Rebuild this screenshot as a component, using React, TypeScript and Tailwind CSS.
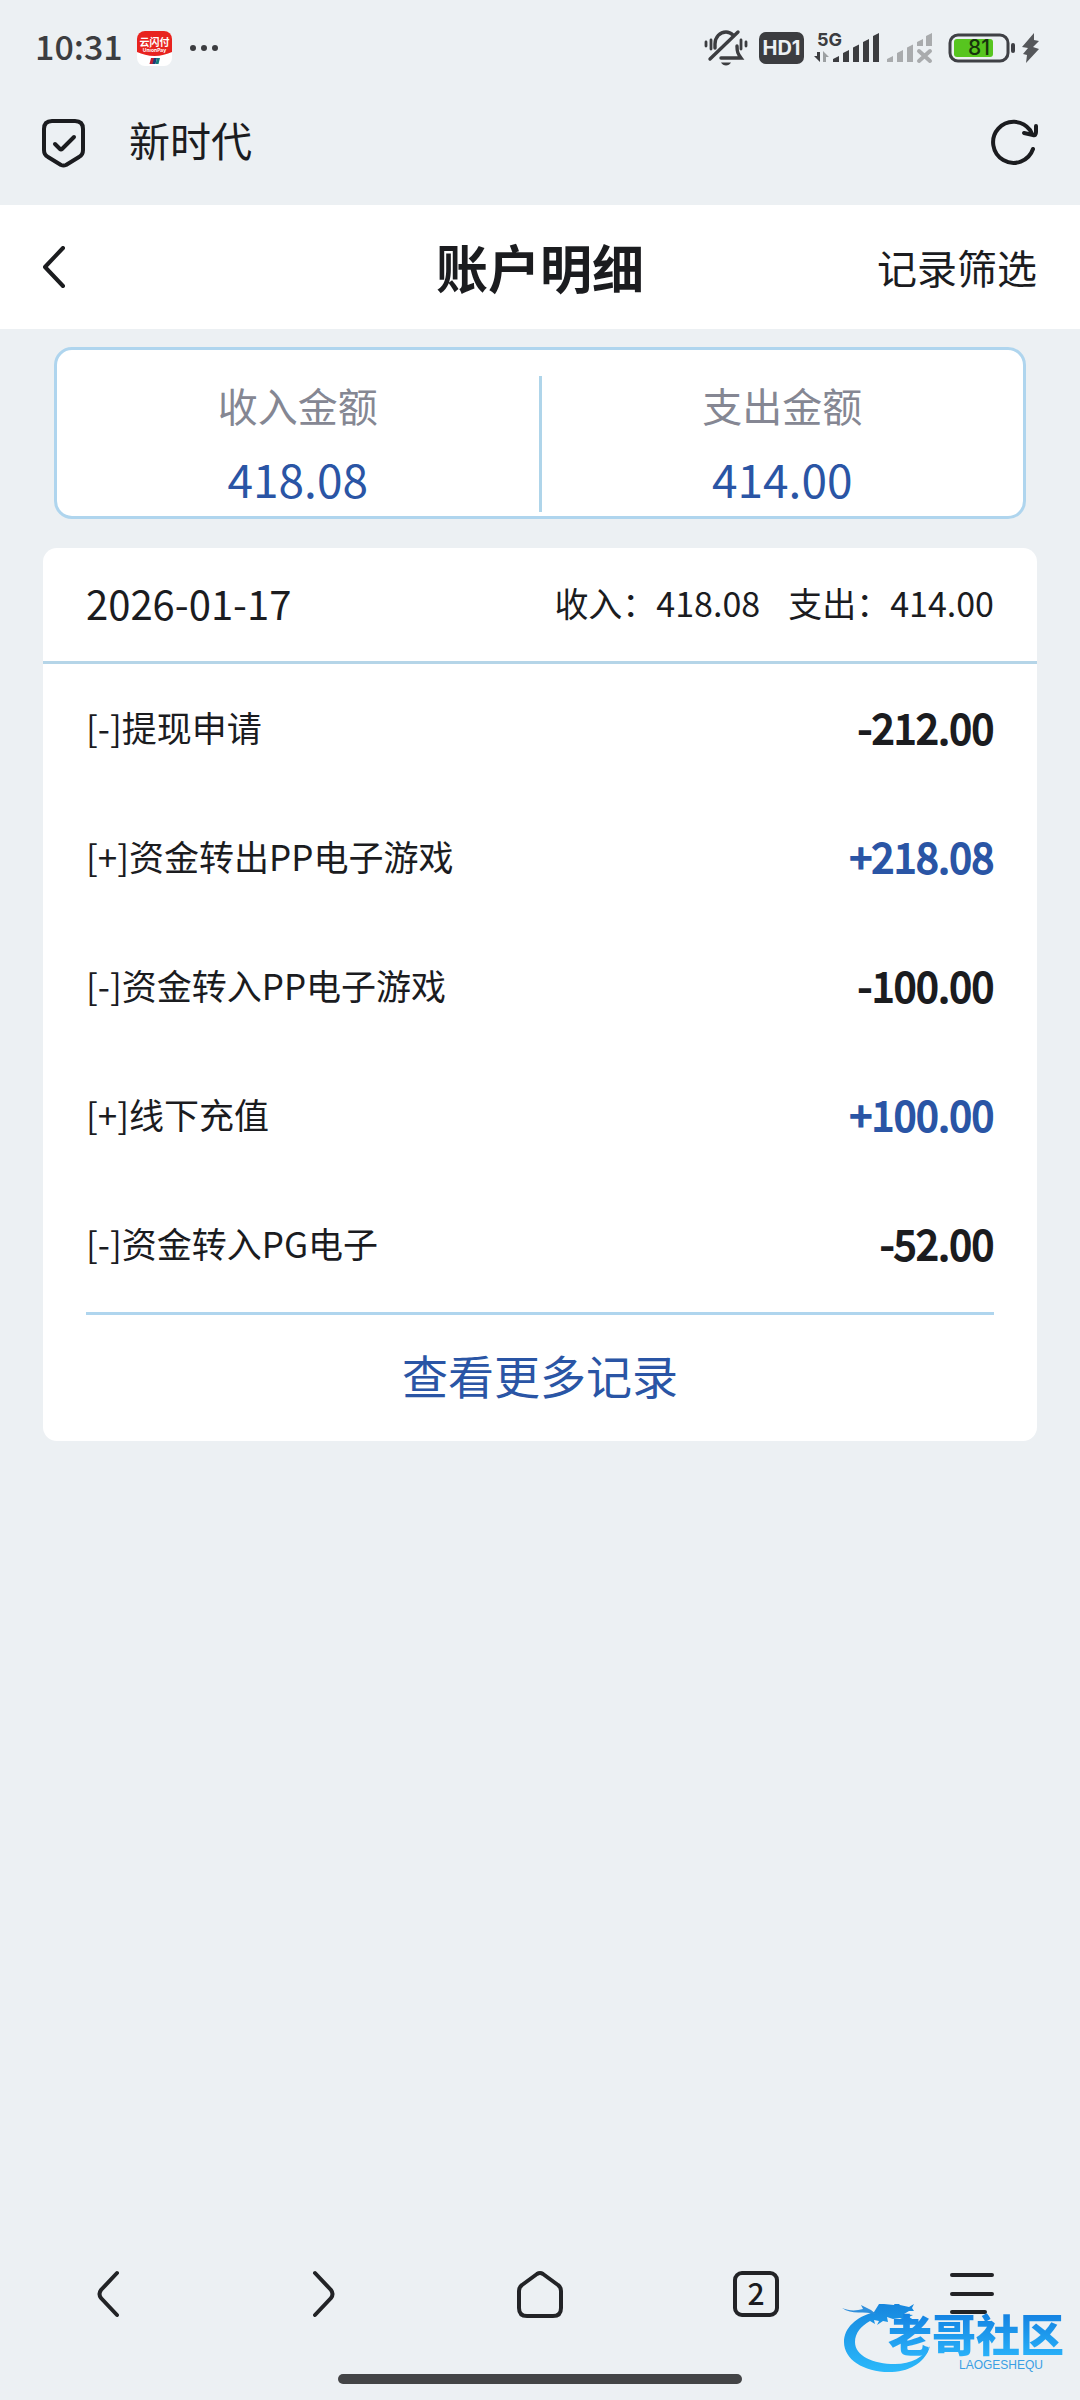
import type { ReactNode } from 'react';

interface RecordItem {
  id: number;
  name: string;
  amount: string;
}

const records: RecordItem[] = [
  { id: 1, name: '[-]提现申请', amount: '-212.00' },
  { id: 2, name: '[+]资金转出PP电子游戏', amount: '+218.08' },
  { id: 3, name: '[-]资金转入PP电子游戏', amount: '-100.00' },
  { id: 4, name: '[+]线下充值', amount: '+100.00' },
  { id: 5, name: '[-]资金转入PG电子', amount: '-52.00' },
];

export default function App() {
  return (
    <div className="relative flex min-h-screen flex-col bg-[#ecf0f3] font-['Noto_Sans_CJK_SC',sans-serif] text-[#1b1c1f]">
      <StatusBar />
      <AddressBar />
      <PageHeader />

      <main className="flex-1 px-[43px] pt-[18px]">
        <section className="mx-[11px] flex h-[172px] rounded-[18px] border-[3px] border-[#afd5ee] bg-white">
          <Total label="收入金额" value="418.08" />
          <div className="mt-[26px] mb-1 w-[3px] bg-[#afd5ea]" />
          <Total label="支出金额" value="414.00" />
        </section>

        <section className="mt-[29px] rounded-[14px] bg-white">
          <div className="flex h-[116px] items-center justify-between border-b-[3px] border-[#b5d5e8] px-[43px] pb-1">
            <h2 className="text-[40px] leading-none">2026-01-17</h2>
            <p className="flex gap-[28px] text-[34px] leading-none">
              <span>收入：418.08</span>
              <span>支出：414.00</span>
            </p>
          </div>

          <ul className="mx-[43px] border-b-[3px] border-[#afd5ee] pb-[3px]">
            {records.map(r => (
              <RecordRow key={r.id} item={r} />
            ))}
          </ul>

          <button type="button" className="block h-[126px] w-full pb-2 text-center text-[46px] leading-none text-[#2a55a5]">
            查看更多记录
          </button>
        </section>
      </main>

      <BottomNav />
      <Watermark />
    </div>
  );
}

function StatusBar() {
  return (
    <div className="flex h-24 items-center justify-between pr-10 pl-[35px] text-[#3c3d40]">
      <div className="flex items-center">
        <span className="w-[102px] pb-1 text-[34px] leading-none font-medium">10:31</span>
        <AppBadge />
        <svg className="ml-[17px]" width="30" height="8" fill="currentColor">
          <circle cx="4" cy="4" r="3" />
          <circle cx="15" cy="4" r="3" />
          <circle cx="26" cy="4" r="3" />
        </svg>
      </div>

      <div className="flex items-center">
        <svg width="44" height="38" viewBox="0 0 44 38" fill="none" stroke="currentColor" strokeWidth="3.4" strokeLinecap="round">
          <path d="M11 19v-4c0-7 5-12 11-12 3 0 5 1 7 3M33 17c0 6 1 8 4 12H17M6 30 34 3" />
          <path d="M2 13v4M7 11v9M37 11v9M42 13v4" strokeWidth="2.8" />
          <path d="M17 33.500h10c-1 2-3 3-5 3s-4-1-5-3Z" fill="currentColor" stroke="none" />
        </svg>
        <span className="ml-[11px] flex h-8 w-[45px] items-center justify-center rounded-[7px] bg-[#3c3d40] font-[Inter,sans-serif] text-[20px] leading-none font-bold text-[#ecf0f3]">
          HD1
        </span>
        <svg className="ml-[10px]" width="66" height="42" viewBox="0 -4 66 42" fill="currentColor">
          <text x="3" y="15" fontSize="18" fontWeight="700" fontFamily="Inter, sans-serif">5G</text>
          <path d="M6 21v10l-6-6h3v-4Z" />
          <path d="M9 31V20l6 6h-3v5Z" opacity="0.45" />
          <path d="M19 31v-3l6-3v6ZM29 31V22l6-3v12ZM39 31V16.500l6-3V31ZM49 31V11l6-3v23ZM59 31V5l6-3v29Z" />
        </svg>
        <svg className="ml-[6px]" width="48" height="34" viewBox="0 0 48 34" fill="#a9abad">
          <path d="M1 31v-3l6-3v6ZM11 31V22l6-3v12ZM21 31V16.500l6-3V31ZM31 15v-4l6-3v7ZM40 15V5l6-3v13Z" />
          <path d="m33 20 11 10M44 20 33 30" stroke="#a9abad" strokeWidth="4" strokeLinecap="round" />
        </svg>
        <Battery />
        <svg className="ml-[6px]" width="19" height="32" viewBox="0 0 19 32" fill="#55575a">
          <path d="M13 1 1 15l6 1-5 6 4 1-1 8 13-14-6-2 6-6-5-1Z" />
        </svg>
      </div>
    </div>
  );
}

function AppBadge() {
  return (
    <svg width="35" height="35" viewBox="0 0 35 35">
      <rect width="35" height="35" rx="8" fill="#fff" />
      <path d="M8 0h19a8 8 0 0 1 8 8v13c-5 2-11 4-17.500 4S5 23 0 21V8a8 8 0 0 1 8-8Z" fill="#e8231f" />
      <text x="17.500" y="15" textAnchor="middle" fontSize="10" fontWeight="700" fill="#fff">云闪付</text>
      <text x="17.500" y="21" textAnchor="middle" fontSize="5" fontWeight="700" fill="#fff" fontFamily="Inter, sans-serif">UnionPay</text>
      <path d="M14 27h4l-1.500 6h-4Z" fill="#c2202f" />
      <path d="M17 27h3l-1.500 6h-3Z" fill="#1d3c78" />
      <path d="M20 27h3l-1.500 6h-3Z" fill="#117a78" />
    </svg>
  );
}

function Battery() {
  return (
    <svg className="ml-[14px]" width="67" height="30" viewBox="0 0 67 30">
      <rect x="2" y="2" width="58" height="26" rx="8" fill="none" stroke="#3f4045" strokeWidth="3" />
      <rect x="6" y="6" width="39" height="18" rx="3" fill="#57c51f" />
      <rect x="63" y="10" width="4" height="10" rx="2" fill="#3f4045" />
      <text x="31" y="22" textAnchor="middle" fontSize="21" fontWeight="500" fill="#17340d" fontFamily="Inter, sans-serif">81</text>
    </svg>
  );
}

function AddressBar() {
  return (
    <div className="flex h-[109px] items-start justify-between pt-[22px] pr-[42px] pl-[41px]">
      <div className="flex items-center gap-[43px]">
        <svg width="45" height="50" viewBox="0 0 45 50" fill="none" stroke="currentColor" strokeWidth="4" strokeLinecap="round" strokeLinejoin="round">
          <path d="M11 3h23q8 0 8 8v21q0 5-4 7L25 47q-2.500 1-5 0L7 39q-4-2-4-7V11q0-8 8-8Z" />
          <path d="m14 26 5 5q1 1 2 0l12-12" />
        </svg>
        <span className="pb-2 text-[41px] leading-none">新时代</span>
      </div>
      <button type="button" aria-label="刷新" className="-mt-px">
        <svg width="48" height="48" viewBox="0 0 48 48" fill="none" stroke="currentColor" strokeWidth="4" strokeLinecap="round" strokeLinejoin="round">
          <path d="M43 32A20.500 20.500 0 1 1 40 13l2 4" />
          <path d="M46 9v6q0 4-3 3l-9-2" />
        </svg>
      </button>
    </div>
  );
}

function PageHeader() {
  return (
    <header className="grid h-[124px] grid-cols-3 items-center bg-white px-[43px]">
      <button type="button" aria-label="返回" className="justify-self-start">
        <svg width="24" height="42" viewBox="0 0 24 42" fill="none" stroke="currentColor" strokeWidth="4" strokeLinecap="round" strokeLinejoin="round">
          <path d="M20 2 2 21l18 19" />
        </svg>
      </button>
      <h1 className="text-center text-[52px] leading-none font-bold">账户明细</h1>
      <button type="button" className="justify-self-end text-[40px] leading-none">
        记录筛选
      </button>
    </header>
  );
}

function Total({ label, value }: { label: string; value: string }) {
  return (
    <div className="flex flex-1 flex-col items-center pt-[35px] leading-none">
      <span className="text-[40px] leading-none text-[#858793]">{label}</span>
      <span className="mt-[30px] text-[46px] leading-none text-[#2a55a5]">{value}</span>
    </div>
  );
}

function RecordRow({ item }: { item: RecordItem }) {
  const income = item.amount.startsWith('+');
  return (
    <li className="flex h-[129px] items-center justify-between pb-1 leading-none">
      <span className="text-[35px]">{item.name}</span>
      <span className={`text-[40px] [-webkit-text-stroke:2px] ${income ? 'text-[#2a55a5]' : 'text-[#1b1c1f]'}`}>
        {item.amount}
      </span>
    </li>
  );
}

function NavButton({ label, children }: { label: string; children: ReactNode }) {
  return (
    <button type="button" aria-label={label} className="flex h-12 flex-1 items-center justify-center">
      {children}
    </button>
  );
}

function BottomNav() {
  return (
    <nav className="pb-4">
      <div className="flex">
        <NavButton label="后退">
          <svg width="24" height="48" viewBox="0 0 24 48" fill="none" stroke="#222326" strokeWidth="4" strokeLinecap="round">
            <path d="M21 3 5 20q-3 4 0 8l16 17" />
          </svg>
        </NavButton>
        <NavButton label="前进">
          <svg width="24" height="48" viewBox="0 0 24 48" fill="none" stroke="#222326" strokeWidth="4" strokeLinecap="round">
            <path d="m3 3 16 17q3 4 0 8L3 45" />
          </svg>
        </NavButton>
        <NavButton label="主页">
          <svg width="46" height="48" viewBox="0 0 46 48" fill="none" stroke="#222326" strokeWidth="4" strokeLinejoin="round">
            <path d="M20 4q3-2 6 0l15 11q3 2 3 6v17q0 8-8 8H10q-8 0-8-8V21q0-4 3-6Z" />
          </svg>
        </NavButton>
        <NavButton label="标签页">
          <span className="flex h-[46px] w-[46px] items-center justify-center rounded-[9px] border-4 border-[#222326] pb-1 text-[30px] leading-none font-medium">
            2
          </span>
        </NavButton>
        <NavButton label="菜单">
          <svg width="44" height="42" viewBox="0 0 44 42" stroke="#222326" strokeWidth="4" strokeLinecap="round">
            <path d="M2 2h40M2 21h40M2 39h33" />
          </svg>
        </NavButton>
      </div>
      <div className="mx-auto mt-[56px] h-[10px] w-[404px] rounded-full bg-[#434446]" />
    </nav>
  );
}

// Community mark that floats over the bottom right corner
function Watermark() {
  return (
    <div className="pointer-events-none absolute right-[16px] bottom-[24px] h-[72px] w-[222px]">
      <svg className="absolute inset-0" width="96" height="72" viewBox="0 0 96 72">
        <defs>
          <linearGradient id="mark" x1="0" y1="0" x2="0" y2="1">
            <stop offset="0" stopColor="#1583dc" />
            <stop offset="1" stopColor="#2bb9fb" />
          </linearGradient>
        </defs>
        <path
          fill="url(#mark)"
          d="M32 8C14 13 2 24 2 38c0 18 21 31 48 30 20-1 34-11 38-26-6 11-19 18-35 18C31 60 13 52 13 38c0-9 6-16 15-21l5 3-1-4 5 1-2 4 6-4 5 1-1-5 6 2 7-1 6 3 8-1-5-3 4-2-9-1 5-3 5 0-2-3 2-4-5 3-9-2-4-4-2 4-10-1 2-4-7 4Z"
        />
        <path fill="#2f8fdc" d="M0 4c7 3 14 3 21 1l-2-4 10 5 5 4C22 7 10 11 0 4Z" />
      </svg>
      <div className="relative flex flex-col items-end">
        <span className="bg-linear-to-b from-[#1277dc] to-[#2bb4fa] bg-clip-text pt-[11px] font-['Liberation_Sans','Noto_Sans_CJK_SC',sans-serif] text-[44px] leading-none font-black text-transparent">
          老哥社区
        </span>
        <span className="mr-[21px] font-['Liberation_Sans',sans-serif] text-[12px] leading-none text-[#3a9fe3]">LAOGESHEQU</span>
      </div>
    </div>
  );
}
